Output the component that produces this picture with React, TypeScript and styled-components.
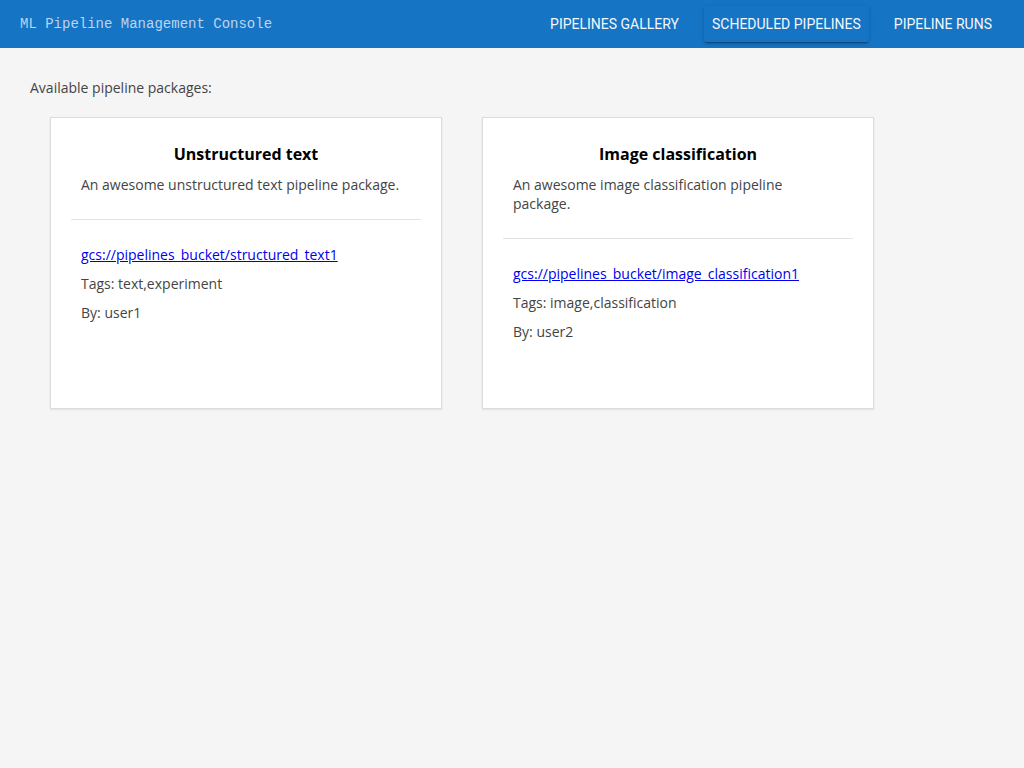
import {FC} from "react";
import styled, {createGlobalStyle} from "styled-components";

interface PipelinePackage {
  id: number;
  name: string;
  description: string;
  location: string;
  tags: string[];
  author: string;
}

const packages: PipelinePackage[] = [
  {
    id: 1,
    name: "Unstructured text",
    description: "An awesome unstructured text pipeline package.",
    location: "gcs://pipelines_bucket/structured_text1",
    tags: ["text", "experiment"],
    author: "user1",
  },
  {
    id: 2,
    name: "Image classification",
    description: "An awesome image classification pipeline package.",
    location: "gcs://pipelines_bucket/image_classification1",
    tags: ["image", "classification"],
    author: "user2",
  },
];

const tabs = ["Pipelines gallery", "Scheduled pipelines", "Pipeline runs"];

const PackageCard: FC<{pkg: PipelinePackage}> = ({pkg}) => {
  return (
    <CardWrapper>
      <CardHead>
        <CardTitle>{pkg.name}</CardTitle>
        <CardDescription>{pkg.description}</CardDescription>
      </CardHead>
      <CardBody>
        <CardLine>
          <a href="#">{pkg.location}</a>
        </CardLine>
        <CardLine>Tags: {pkg.tags.join(",")}</CardLine>
        <CardLine>By: {pkg.author}</CardLine>
      </CardBody>
    </CardWrapper>
  );
};

export default function App() {
  return (
    <>
      <GlobalStyle />
      <Toolbar>
        <AppTitle>ML Pipeline Management Console</AppTitle>
        <Nav>
          {tabs.map((t) => (
            <NavButton key={t} $active={t === "Scheduled pipelines"}>
              {t}
            </NavButton>
          ))}
        </Nav>
      </Toolbar>
      <Main>
        <Caption>Available pipeline packages:</Caption>
        <CardList>
          {packages.map((p) => (
            <PackageCard key={p.id} pkg={p} />
          ))}
        </CardList>
      </Main>
    </>
  );
}

//css-style
const GlobalStyle = createGlobalStyle`
  html, body {
    margin: 0;
    padding: 0;
    background: #f5f5f5;
    font-family: "Open Sans", "Liberation Sans", sans-serif;
  }
`;

const Toolbar = styled.header`
  height: 48px;
  background: #1674c4;
  display: flex;
  align-items: center;
  justify-content: space-between;
  padding: 0 24px 0 20px;
`;

const AppTitle = styled.div`
  font-family: "Liberation Mono", "Courier New", monospace;
  font-size: 14px;
  color: #bcd4ef;
  padding-bottom: 1px;
`;

const Nav = styled.nav`
  display: flex;
  align-items: center;
  gap: 17px;
`;

const NavButton = styled.button<{$active?: boolean}>`
  font-family: Roboto, "Liberation Sans", sans-serif;
  font-size: 14px;
  text-transform: uppercase;
  color: #f4f7fb;
  background: #1674c4;
  border: none;
  border-radius: 3px;
  height: 36px;
  padding: 0 8px;
  cursor: pointer;
  box-shadow: ${(p) =>
    p.$active
      ? "0 3px 1px -2px rgba(0,0,0,0.2), 0 2px 2px 0 rgba(0,0,0,0.14), 0 1px 5px 0 rgba(0,0,0,0.12)"
      : "none"};
`;

const Main = styled.main`
  padding: 30px 30px;
`;

const Caption = styled.div`
  font-size: 14px;
  color: #444;
  line-height: 20px;
`;

const CardList = styled.div`
  display: flex;
  gap: 40px;
  padding: 19px 20px;
`;

const CardWrapper = styled.div`
  box-sizing: border-box;
  width: 392px;
  height: 292px;
  padding: 0 20px;
  background: #fff;
  border: 1px solid #dcdcdc;
  box-shadow: 0 1px 2px rgba(0, 0, 0, 0.08);
`;

const CardHead = styled.div`
  padding: 25px 0 25px;
  border-bottom: 1px solid #e3e3e3;
`;

const CardTitle = styled.div`
  font-size: 16px;
  font-weight: 700;
  line-height: 22px;
  color: #000;
  text-align: center;
`;

const CardDescription = styled.div`
  margin: 10px 0 0;
  padding: 0 10px;
  max-width: 325px;
  font-size: 14px;
  line-height: 19px;
  color: #444;
`;

const CardBody = styled.div`
  padding: 25px 10px 0;
  display: flex;
  flex-direction: column;
  gap: 9px;
`;

const CardLine = styled.div`
  font-size: 14px;
  line-height: 20px;
  color: #444;
  a {
    color: #0000ee;
  }
`;
